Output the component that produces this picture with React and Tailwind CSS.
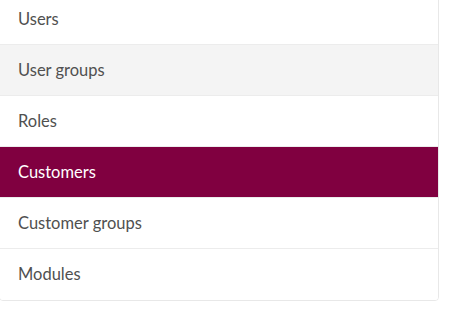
export default function App() {
  const items = [
    { label: "Users" },
    { label: "User groups", hover: true },
    { label: "Roles" },
    { label: "Customers", active: true },
    { label: "Customer groups" },
    { label: "Modules" },
  ];
  return (
    <div className="w-[451px] h-[319px] bg-white overflow-hidden" style={{ fontFamily: "Lato, 'Open Sans', sans-serif" }}>
      <div className="-mt-[7px] -ml-px w-[440px] bg-white border border-[#e8e8e8] rounded-[4px] overflow-hidden">
        {items.map((it, i) => (
          <div
            key={it.label}
            className={
              "h-[51px] flex items-center pl-[18px] text-[16.5px] " +
              (i < items.length - 1 ? "border-b border-[#ececec] " : "") +
              (it.active
                ? "bg-[#800040] text-white border-[#800040]"
                : it.hover
                ? "bg-[#f4f4f4] text-[#505050]"
                : "bg-white text-[#505050]")
            }
          >
            {it.label}
          </div>
        ))}
      </div>
    </div>
  );
}
